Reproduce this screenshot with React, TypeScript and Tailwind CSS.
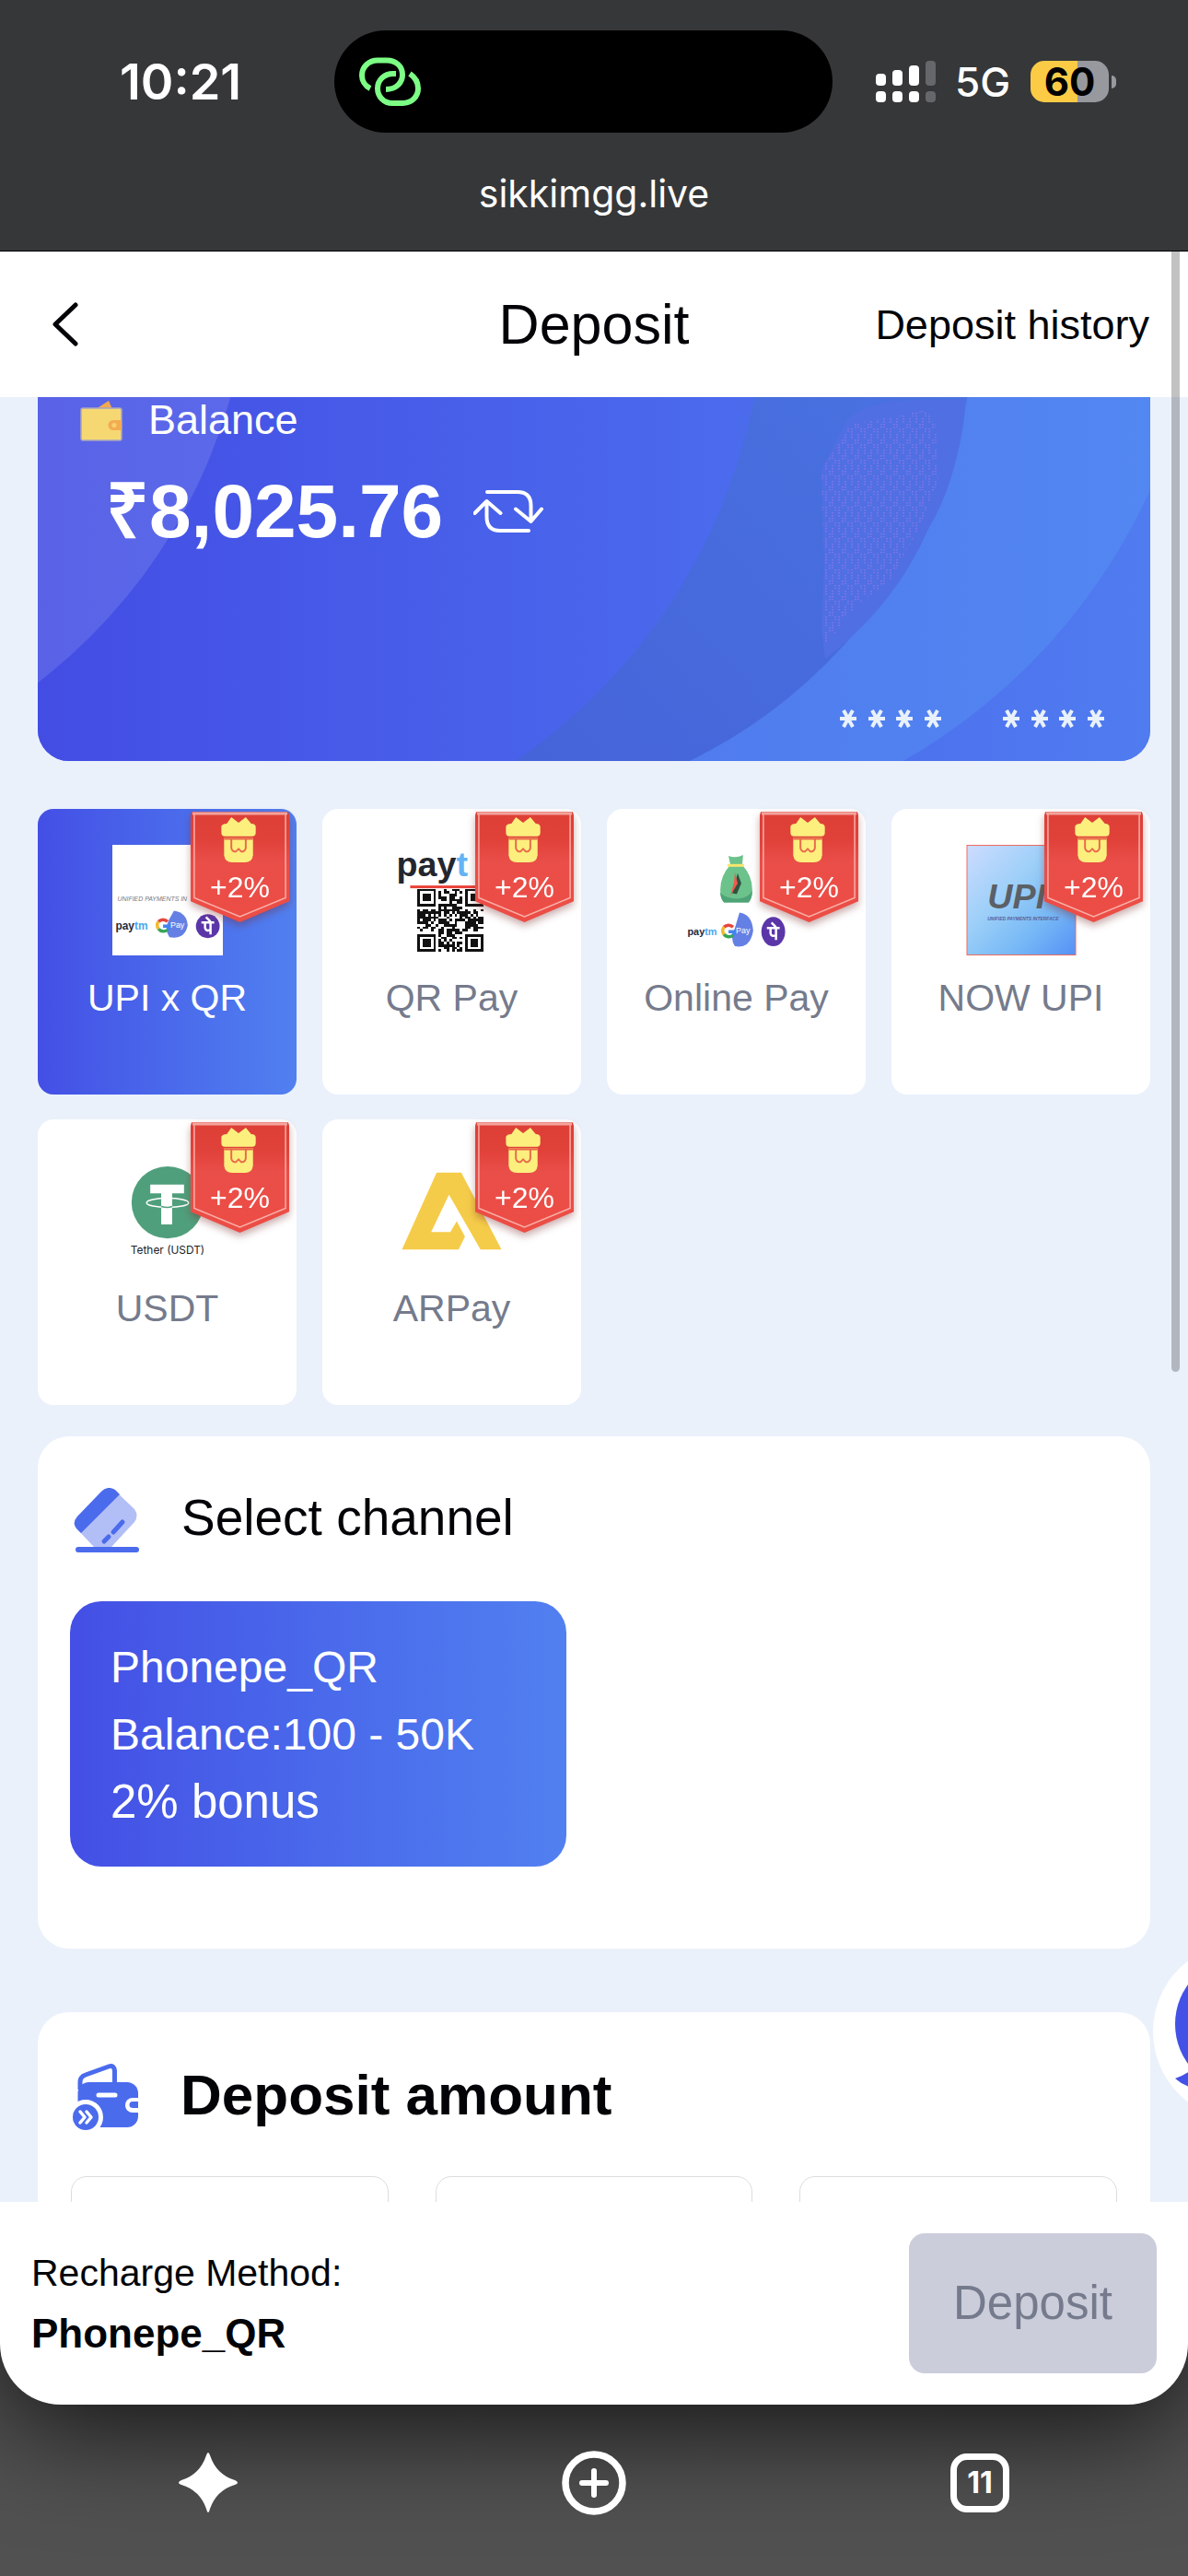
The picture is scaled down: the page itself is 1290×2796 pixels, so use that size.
import React, { useId } from "react";

function LinkIcon() {
  return (
    <svg viewBox="18 11 70 56" className="h-14 w-[70px]" fill="none" stroke="#7dff86" strokeWidth="6" aria-hidden="true">
      <path d="M31 46C25 43 22 37 22 32C22 22 30 15.500 39 15.500H49C59 15.500 66 22 66 31C66 40 59 47 48 47" />
      <path d="M59 30H56C46 30 39 37 39 46C39 55 46 62 55 62H66C76 62 83 55 83 46C83 39 80 34 74 30" />
    </svg>
  );
}

function SignalIcon() {
  return (
    <svg viewBox="0 0 66 46" className="h-[46px] w-[66px]" fill="#fff" aria-hidden="true">
      <rect x="0" y="14" width="11" height="13" rx="4" />
      <rect x="18" y="10" width="11" height="17" rx="4" />
      <rect x="36" y="5" width="11" height="22" rx="4" />
      <rect x="54" y="0" width="11" height="27" rx="4" fill="#66676a" />
      <rect x="0" y="33" width="11" height="12" rx="4" />
      <rect x="18" y="33" width="11" height="12" rx="4" />
      <rect x="36" y="33" width="11" height="12" rx="4" />
      <rect x="54" y="33" width="11" height="12" rx="4" fill="#66676a" />
    </svg>
  );
}

function StatusBar() {
  return (
    <header className="h-[273px] shrink-0 border-b border-black bg-[#363739] pt-[33px] font-['Inter',sans-serif] text-white">
      <div className="grid h-[111px] grid-cols-[363fr_541fr_386fr] items-center">
        <span className="pl-[130px] text-[54px] font-semibold">10:21</span>
        <div className="flex h-full items-center rounded-full bg-black pl-[26px]">
          <LinkIcon />
        </div>
        <div className="flex items-center pl-[47px]">
          <SignalIcon />
          <span className="ml-5 text-[44px] font-medium">5G</span>
          <div className="ml-[22px] flex items-center gap-[3px]">
            <div className="flex h-[45px] w-[85px] items-center justify-center rounded-[15px] bg-[linear-gradient(90deg,#fbcb45_60%,#98999f_60%)] text-[42px] font-bold text-black">
              60
            </div>
            <span className="h-[14px] w-[5px] rounded-r-full bg-[#98999f]" />
          </div>
        </div>
      </div>
      <div className="pt-9 text-center text-[41px] leading-[60px]">sikkimgg.live</div>
    </header>
  );
}

function PageHeader() {
  return (
    <div className="grid h-[158px] shrink-0 grid-cols-3 items-center bg-white px-[42px] text-[#030408]">
      <button type="button" aria-label="Back" className="flex w-16 items-center">
        <svg viewBox="0 0 30 48" className="ml-[14px] h-12 w-[30px]" fill="none" stroke="currentColor" strokeWidth="5" strokeLinecap="round" strokeLinejoin="round">
          <path d="M26 3L4 24L26 45" />
        </svg>
      </button>
      <h1 className="text-center text-[61px] leading-[72px]">Deposit</h1>
      <a href="#history" className="pt-[2px] text-right text-[45px] leading-[56px] whitespace-nowrap">
        Deposit history
      </a>
    </div>
  );
}

function Stars() {
  return (
    <svg viewBox="0 0 110 22" className="h-[22px] w-[110px]" stroke="#e9f1fb" strokeWidth="4" aria-hidden="true">
      {[9, 40, 70, 101].map((x) => (
        <path key={x} d={`M${x - 9} 11h18M${x - 5} 2l10 18M${x + 5} 2l-10 18`} />
      ))}
    </svg>
  );
}

function BalanceCard() {
  return (
    <section className="relative h-[395px] overflow-hidden rounded-b-[34px] bg-[#4a64ea] text-white">
      <svg viewBox="0 0 1208 395" preserveAspectRatio="xMidYMid slice" className="absolute inset-0 size-full" aria-hidden="true">
        <defs>
          <linearGradient id="card-base" x1="0" x2="1">
            <stop offset="0" stopColor="#434de4" />
            <stop offset="0.55" stopColor="#4a67ec" />
            <stop offset="1" stopColor="#507cf0" />
          </linearGradient>
          <linearGradient id="card-band" x1="0" x2="1">
            <stop offset="0" stopColor="#4b6be9" />
            <stop offset="1" stopColor="#5388f2" />
          </linearGradient>
          <linearGradient id="card-dark" gradientUnits="userSpaceOnUse" x1="550" x2="980" y1="395" y2="0">
            <stop offset="0" stopColor="#4564d9" />
            <stop offset="1" stopColor="#4972e0" />
          </linearGradient>
          <pattern id="card-speckle" width="14" height="17" patternUnits="userSpaceOnUse">
            <path d="M2 0v11M9 6v10M6 12v5M12 0v4" stroke="#8478ea" strokeWidth="1.500" strokeDasharray="1.500 1.500" />
          </pattern>
          <mask id="card-ring">
            <rect width="1208" height="395" fill="#fff" />
            <circle cx="171" cy="-116" r="618" fill="#000" />
          </mask>
        </defs>
        <rect width="1208" height="395" fill="url(#card-base)" />
        <g mask="url(#card-ring)">
          <circle cx="619" cy="-167" r="647" fill="url(#card-band)" />
          <circle cx="465" cy="-103" r="554" fill="url(#card-dark)" />
        </g>
        <path d="M851 79L878 26Q892 10 930 4L1008 2C1004 60 985 115 968 141C940 205 900 250 855 284L851 250L854 180Z" fill="#506fe2" />
        <path d="M851 79L882 30L965 14L975 30L978 90L958 140L925 200L890 225L855 270Z" fill="url(#card-speckle)" />
        <circle cx="-361" cy="-159" r="592" fill="#fff" opacity="0.12" />
      </svg>
      <div className="relative flex h-full flex-col pl-[46px]">
        <div className="flex items-center gap-7 text-[45px] leading-[50px]">
          <svg viewBox="0 0 46 46" className="size-[46px]" aria-hidden="true">
            <path d="M17 11L31 2L35 11Z" fill="#f2a94e" />
            <rect x="1" y="10" width="44" height="35" rx="2" fill="#f6d873" stroke="#a7a4c0" strokeWidth="1.500" />
            <path d="M45 23h-9a5.500 5.500 0 000 11h9z" fill="#f2ad52" />
            <circle cx="37" cy="28.500" r="2.500" fill="#f8d26f" />
          </svg>
          Balance
        </div>
        <div className="mt-6 flex items-center gap-[33px] pl-7">
          <span className="text-[82px] leading-[100px] font-bold">₹8,025.76</span>
          <button type="button" aria-label="Refresh balance">
            <svg viewBox="0 0 76 48" className="h-12 w-[76px]" fill="none" stroke="#fff" strokeWidth="4" strokeLinecap="round" strokeLinejoin="round">
              <path d="M15 3H48Q62.500 3 62.500 18V34M46 21.500L62.500 35L74 21.500M60 45H29Q14.500 45 14.500 30V13M1.500 26L14.500 13L29.500 26" />
            </svg>
          </button>
        </div>
        <div className="mt-auto mr-[50px] mb-[35px] flex justify-end gap-[67px]">
          <Stars />
          <Stars />
        </div>
      </div>
    </section>
  );
}

function WalletRow({ x, y, tall }: { x: number; y: number; tall?: boolean }) {
  const ry = tall ? 16 : 13;
  const fan = tall ? 20 : 16;
  return (
    <g>
      <text x={tall ? x + 7 : x} y={y + 5} fontSize={tall ? 11 : 12} fontWeight="700" fill="#22283a">
        pay<tspan fill="#4aa8ee">tm</tspan>
      </text>
      <path d={`M${x + 64} ${y - fan}q14 2 15 ${fan}q-3 ${fan} -20 ${fan - 3}q-6 -9 0 -20z`} fill="#6580e4" />
      <g fill="none" strokeWidth="3.500">
        <path d={`M${x + 57} ${y - 4}a7 7 0 00-10 0`} stroke="#e5483c" />
        <path d={`M${x + 47} ${y - 4}a7 7 0 000 8`} stroke="#f3b92f" />
        <path d={`M${x + 47} ${y + 4}a7 7 0 0010 1`} stroke="#3aa556" />
        <path d={`M${x + 52} ${y + 1}h7a7 7 0 01-2 4`} stroke="#4283ee" />
      </g>
      <text x={x + 60} y={y + 3} fontSize="9" fill="#fff">Pay</text>
      <ellipse cx={x + 101} cy={y + 1} rx="13" ry={ry} fill="#5b36a8" />
      <path d={`M${x + 94} ${y - 3}h14M${x + 104} ${y - 3}v13M${x + 98} ${y - 3}v6q1 4 6 2M${x + 99} ${y - 9}l5 5`} stroke="#fff" strokeWidth="2.500" fill="none" />
    </g>
  );
}

function UpiQrLogo() {
  return (
    <svg viewBox="0 0 120 121" className="size-[120px] bg-white">
      <text x="5" y="62" fontSize="7" fontStyle="italic" fill="#77777b">UNIFIED PAYMENTS IN</text>
      <WalletRow x={3} y={88} />
    </svg>
  );
}

const QR_SIZE = 25;

function isDark(col: number, row: number) {
  const corners = [[0, 0], [0, 18], [18, 18], [18, 0]];
  for (const [cx, cy] of corners) {
    const dx = col - cx;
    const dy = row - cy;
    if (dx >= -1 && dx <= 7 && dy >= -1 && dy <= 7) {
      const ring = Math.max(Math.abs(dx - 3), Math.abs(dy - 3));
      return ring === 3 || ring <= 1;
    }
  }
  return (col * 7 + row * 13 + ((col * row * 5) % 11) + ((col ^ row) % 3)) % 5 < 3;
}

function QrPayLogo() {
  const cells: React.ReactNode[] = [];
  for (let row = 0; row < QR_SIZE; row++) {
    for (let col = 0; col < QR_SIZE; col++) {
      if (isDark(col, row)) cells.push(<rect key={`${col}-${row}`} x={col} y={row} width="1" height="1" />);
    }
  }
  return (
    <svg viewBox="0 0 120 121" className="size-[120px]">
      <text x="-1" y="34" fontSize="38" fontWeight="700" fill="#24262e">
        pay<tspan fill="#64b4f4">t</tspan>
      </text>
      <g transform="translate(22 48) scale(2.900 2.760)" fill="#111" shapeRendering="crispEdges">{cells}</g>
      <rect x="14" y="44.500" width="80" height="3" fill="#ea4038" />
    </svg>
  );
}

function OnlinePayLogo() {
  return (
    <svg viewBox="0 0 120 121" className="size-[120px]">
      <path d="M51 12q8 3 16-1l-1 11q11 12 11 27q0 10-4 14H46q-4-4-4-14q0-15 11-27z" fill="#6cc28b" />
      <path d="M42 52q3 6 18 7q13 0 17-9q0 9-4 13H46q-4-4-4-11z" fill="#4ea377" />
      <rect x="50" y="21" width="18" height="3" fill="#f8e56f" />
      <path d="M61 31l4 11l-5 12l-5-1z" fill="#32503f" />
      <path d="M58 30l3 12l-8 14l4-15z" fill="#f05a4d" />
      <WalletRow x={-1} y={94} tall />
    </svg>
  );
}

function NowUpiLogo() {
  return (
    <svg viewBox="0 0 120 121" className="size-[120px]">
      <defs>
        <linearGradient id="now-sky" x1="0" y1="0" x2="1" y2="1">
          <stop offset="0" stopColor="#cddcff" />
          <stop offset="0.4" stopColor="#9ccff8" />
          <stop offset="0.700" stopColor="#76b8f6" />
          <stop offset="1" stopColor="#5590f6" />
        </linearGradient>
      </defs>
      <rect x="0.500" y="0.500" width="119" height="120" fill="url(#now-sky)" stroke="#ef6b5f" />
      <text x="23" y="70" fontSize="38" fontStyle="italic" fontWeight="700" fill="#5b6066">UPI</text>
      <text x="23" y="83" fontSize="5" fontStyle="italic" fontWeight="700" fill="#5b6099">UNIFIED PAYMENTS INTERFACE</text>
    </svg>
  );
}

function UsdtLogo() {
  return (
    <svg viewBox="0 0 120 121" className="size-[120px]">
      <circle cx="60" cy="51.500" r="39.500" fill="#509f7c" />
      <path d="M41 32h37v9.500H65v34H53v-34H41z" fill="#fff" />
      <ellipse cx="60" cy="52" rx="23" ry="5" fill="none" stroke="#fff" strokeWidth="1.500" />
      <path d="M53 56q7 2 12 0" stroke="#509f7c" strokeWidth="1.500" fill="none" />
      <text x="60" y="108" textAnchor="middle" fontSize="12" className="font-['Inter',sans-serif]" fill="#222">Tether (USDT)</text>
    </svg>
  );
}

function ArPayLogo() {
  return (
    <svg viewBox="0 0 120 121" className="size-[120px]">
      <path d="M43 19H70L114 103H91L56.500 43L37 84H58L65 72L74 89L67 103H5Z" fill="#f5cc49" />
    </svg>
  );
}

function BonusBadge() {
  const id = useId();
  return (
    <div className="absolute top-[3px] right-2 flex h-[121px] w-[107px] justify-center pt-16 drop-shadow-[0_4px_4px_rgba(120,40,40,0.4)]">
      <svg viewBox="0 0 109 123" className="absolute inset-0 size-full" aria-hidden="true">
        <defs>
          <linearGradient id={id} x1="0" y1="0" x2="0" y2="1">
            <stop offset="0" stopColor="#dd3f37" />
            <stop offset="0.250" stopColor="#e0423a" />
            <stop offset="0.450" stopColor="#ea4e48" />
            <stop offset="1" stopColor="#ec4d45" />
          </linearGradient>
        </defs>
        <path d="M1 0H108L109 4V99L54.500 122L0 99V4Z" fill={`url(#${id})`} />
        <path d="M4 1V95L54.500 116L105 95V1" fill="none" stroke="#f8b0a8" strokeWidth="1.500" />
        <path d="M2 2H107" stroke="#f3a39c" strokeWidth="3" />
        <path d="M34 16Q35 13 40 13L45 6L53 12L61 6L67 13Q72 13 72 17V23Q72 27 68 27H38Q34 27 34 23Z" fill="#fcef7e" />
        <path d="M37 29H69V48Q68 56 60 56H46Q38 56 37 48Z" fill="#fcef7e" />
        <path d="M37 30H69M45 30V40Q46 44 50 44L53 41L56 44Q60 44 61 40V30" fill="none" stroke="#ea6a4b" strokeWidth="2" />
      </svg>
      <span className="relative text-[32px] leading-9 text-white">+2%</span>
    </div>
  );
}

const METHODS = [
  { name: "UPI x QR", Logo: UpiQrLogo, active: true },
  { name: "QR Pay", Logo: QrPayLogo },
  { name: "Online Pay", Logo: OnlinePayLogo },
  { name: "NOW UPI", Logo: NowUpiLogo },
  { name: "USDT", Logo: UsdtLogo },
  { name: "ARPay", Logo: ArPayLogo },
];

function MethodGrid() {
  return (
    <div className="mt-[52px] grid grid-cols-4 gap-x-7 gap-y-[27px]">
      {METHODS.map(({ name, Logo, active }) => (
        <button
          key={name}
          type="button"
          aria-pressed={!!active}
          className={
            "relative flex h-[310px] flex-col items-center rounded-[17px] pt-[39px] text-[41px] leading-[48px] " +
            (active ? "bg-linear-to-r from-[#444fe5] to-[#5180f0] text-white" : "bg-white text-[#757b8c]")
          }
        >
          <Logo />
          <span className="mt-[22px]">{name}</span>
          <BonusBadge />
        </button>
      ))}
    </div>
  );
}

function ChannelIcon() {
  return (
    <svg viewBox="0 0 72 72" className="mt-2 size-[72px]" aria-hidden="true">
      <path d="M30 4Q37-3 45 3L66 23Q71 30 66 37L41 64H22L3 44Q-2 38 4 31Z" fill="#b2bef6" />
      <path d="M30 4Q37-3 45 2L50 7L8 49L3 44Q-2 38 4 31Z" fill="#4b6bed" />
      <path d="M53 37L43 48M38 53L33 58" stroke="#4b6bed" strokeWidth="5" strokeLinecap="round" />
      <rect x="2" y="64" width="69" height="6" rx="3" fill="#4b6bed" />
    </svg>
  );
}

function AmountIcon() {
  return (
    <svg viewBox="0 0 72 72" className="mt-1 size-[72px]" fill="none" aria-hidden="true">
      <path d="M8 28V20Q8 14 14 12L39 3Q45 1 45.500 8V22" stroke="#4b6bed" strokeWidth="5" />
      <rect x="5.500" y="20" width="65.500" height="49" rx="12" fill="#4b6bed" />
      <path d="M28 34H46" stroke="#fff" strokeWidth="5" strokeLinecap="round" />
      <path d="M72 37H65A7.500 7.500 0 0065 53H72Z" fill="#fff" />
      <path d="M71 41H65A3.500 3.500 0 0065 48H71Z" fill="#4b6bed" />
      <circle cx="14" cy="58" r="19" fill="#fff" />
      <circle cx="14" cy="58" r="14" fill="#4b6bed" />
      <path d="M8 52L13 58L8 64M15 52L20 58L15 64" stroke="#fff" strokeWidth="3.500" strokeLinecap="round" strokeLinejoin="round" />
    </svg>
  );
}

function SelectChannel() {
  return (
    <section className="mt-[34px] h-[556px] rounded-[34px] bg-white px-[35px] pt-12 text-[#030408]">
      <div className="flex h-20 items-center gap-[45px] pl-1">
        <ChannelIcon />
        <h2 className="text-[55px] leading-[64px]">Select channel</h2>
      </div>
      <button
        type="button"
        aria-pressed="true"
        className="mt-[51px] flex h-[288px] w-[539px] max-w-full flex-col justify-center rounded-[34px] bg-linear-to-r from-[#444fe5] to-[#5180f0] pl-11 text-left text-[48px] leading-[73px] whitespace-nowrap text-white"
      >
        <span>Phonepe_QR</span>
        <span>Balance:100 - 50K</span>
        <span className="text-[51px]">2% bonus</span>
      </button>
    </section>
  );
}

function DepositAmount() {
  return (
    <section className="mt-[69px] rounded-t-[34px] bg-white px-[36px] pt-[50px] text-[#030408]">
      <div className="flex h-20 items-center gap-[45px] pl-[2px]">
        <AmountIcon />
        <h2 className="text-[62px] leading-[72px] font-bold">Deposit amount</h2>
      </div>
      <div className="mt-12 grid grid-cols-3 gap-[51px]">
        {[1, 2, 3].map((slot) => (
          <div key={slot} className="h-32 rounded-[17px] border border-[#dfdcdd]" />
        ))}
      </div>
    </section>
  );
}

function SupportBubble() {
  return (
    <button type="button" aria-label="Customer service" className="absolute top-[1678px] -right-[154px] size-[192px] overflow-hidden rounded-full bg-white">
      <svg viewBox="0 0 192 192" className="size-full" fill="#4351e6">
        <circle cx="97" cy="88" r="73" />
        <path d="M24 147Q34 144 44 136L60 160Q36 158 24 147Z" />
      </svg>
    </button>
  );
}

function FooterBar() {
  return (
    <div className="relative flex h-[220px] shrink-0 items-center justify-between rounded-b-[66px] bg-white px-[34px] text-[#030408] shadow-[0_20px_120px_rgba(0,0,0,0.8)]">
      <div className="text-[41px] leading-[66px]">
        <div>Recharge Method:</div>
        <div className="text-[44px] font-bold">Phonepe_QR</div>
      </div>
      <button type="button" className="h-[152px] w-[269px] rounded-[17px] bg-[#cbcddb] text-[51px] text-[#757b8c]">
        Deposit
      </button>
    </div>
  );
}

function BrowserToolbar() {
  return (
    <nav className="relative z-10 flex h-[186px] shrink-0 justify-between px-[190px] pt-[49px] text-white">
      <button type="button" aria-label="Assistant" className="size-[72px]">
        <svg viewBox="0 0 72 72" className="size-full" fill="currentColor">
          <path d="M36 3Q37 3 38 6Q45 27 65 33Q68 34 68 36Q68 37 65 38Q45 44 38 64Q37 68 36 68Q35 68 34 64Q27 44 7 38Q4 37 4 36Q4 34 7 33Q27 27 34 6Q35 3 36 3Z" />
        </svg>
      </button>
      <button type="button" aria-label="New tab" className="size-[72px]">
        <svg viewBox="0 0 72 72" className="size-full" fill="none" stroke="currentColor" strokeWidth="7.500">
          <circle cx="36" cy="36" r="31" />
          <path d="M36 23V49M23 36H49" strokeWidth="6" strokeLinecap="round" />
        </svg>
      </button>
      <button type="button" aria-label="Tabs" className="flex size-[72px] items-center justify-center">
        <span className="flex size-16 items-center justify-center rounded-[18px] border-[7px] border-white font-['Inter',sans-serif] text-[32px] font-bold">11</span>
      </button>
    </nav>
  );
}

export default function App() {
  return (
    <div className="flex h-screen flex-col overflow-hidden bg-[#515151] font-['Liberation_Sans',Arial,sans-serif]">
      <StatusBar />
      <div className="relative z-10 flex min-h-0 flex-1 flex-col">
        <PageHeader />
        <main className="relative min-h-0 flex-1 overflow-hidden bg-[#eaf1fb] px-[41px]">
          <BalanceCard />
          <MethodGrid />
          <SelectChannel />
          <DepositAmount />
          <SupportBubble />
        </main>
        <span className="absolute top-0 right-[9px] h-[1216px] w-[9px] rounded-b-full bg-black/24" />
      </div>
      <FooterBar />
      <BrowserToolbar />
    </div>
  );
}
